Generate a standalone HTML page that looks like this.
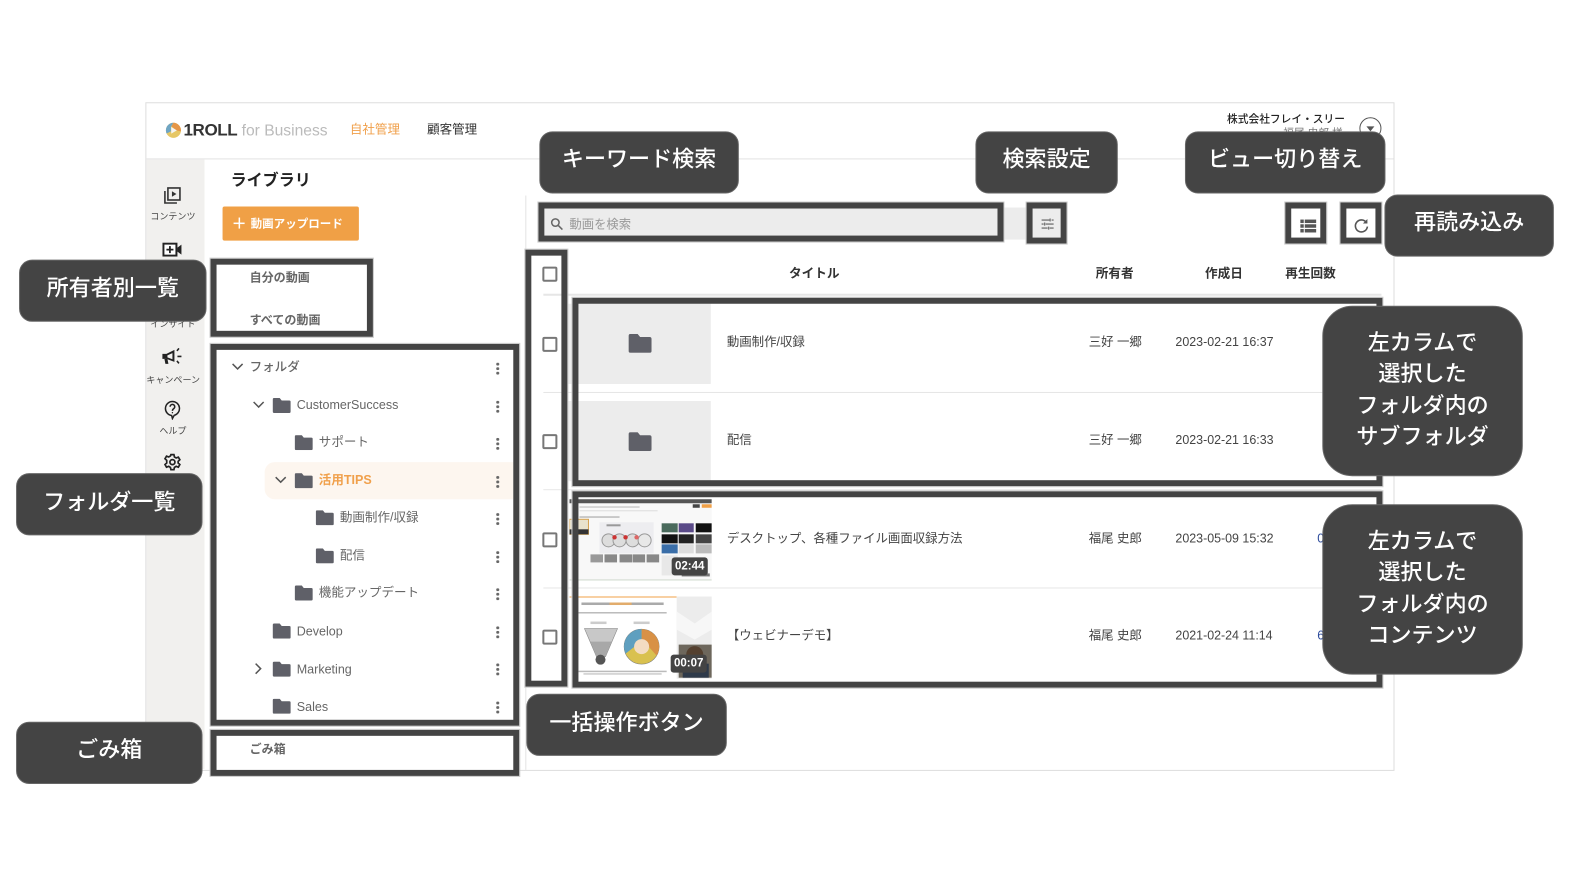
<!DOCTYPE html>
<html lang="ja"><head><meta charset="utf-8"><title>1ROLL</title>
<style>
*{box-sizing:border-box;margin:0;padding:0}
html,body{width:1572px;height:886px;background:#fff;overflow:hidden}
body{position:relative;font-family:"Liberation Sans","Noto Sans CJK JP",sans-serif;color:#333}
#w{position:absolute;left:0;top:0;width:1572px;height:886px;transform:scale(1.0025);transform-origin:0 0}
.a{position:absolute;white-space:nowrap}
.fr{position:absolute;border:6px solid #444;outline:1px solid #ccc;background:transparent}
.cb{position:absolute;left:541px;width:15px;height:15px;border:2px solid #777;border-radius:2px;background:#fff}
.tip{position:absolute;background:#444;border:1px solid #666;color:#fff;border-radius:13px;display:flex;align-items:center;justify-content:center;text-align:center;font-size:22px;font-weight:500;line-height:31.5px;padding-bottom:5px}
.tip.m{padding-bottom:3px;border-radius:30px;font-size:22px}
.lab{position:absolute;left:146px;width:53px;text-align:center;font-size:9px;color:#444;white-space:nowrap}
.t{position:absolute;font-size:12.5px;color:#666;white-space:nowrap}
.d{position:absolute;left:495px;width:3px;height:13px;background:radial-gradient(circle,#666 1.4px,transparent 1.6px) 0 0/3px 4.5px repeat-y}
.f{position:absolute;width:18px;height:15px}
.cell{position:absolute;font-size:12.4px;color:#444;white-space:nowrap;line-height:18px}
.hd{position:absolute;top:262px;font-size:12.6px;font-weight:700;color:#333;white-space:nowrap}
.ln{position:absolute;left:542px;width:836px;height:1px;background:#e6e6e6}
</style></head><body><div id="w">
<svg width="0" height="0" style="position:absolute"><defs><symbol id="fo" viewBox="0 0 18 15"><path d="M1.5 0H7l2 2.500h7.500A1.500 1.500 0 0 1 18 4v9.500a1.500 1.500 0 0 1-1.500 1.500h-15A1.500 1.500 0 0 1 0 13.500V1.500A1.500 1.500 0 0 1 1.500 0z" fill="#5f6068"/></symbol></defs></svg>

<!-- app frame -->
<div class="a" style="left:145px;top:102px;width:1246px;height:667px;border:1.5px solid #ddd"></div>
<div class="a" style="left:146px;top:158px;width:1244px;height:1px;background:#e2e2e2"></div>
<div class="a" style="left:146px;top:159px;width:58px;height:608px;background:#f1f0ee"></div>
<div class="a" style="left:524px;top:195px;width:1px;height:573px;background:#e4e4e4"></div>

<!-- header -->
<svg class="a" style="left:165px;top:122px" width="16" height="16" viewBox="0 0 16 16"><circle cx="8" cy="8" r="7.500" fill="#e6c766"/><path d="M8 .5A7.500 7.500 0 0 0 1.200 11.200L5.500 9V4.500z" fill="#6fa5c4"/><path d="M8 .5A7.500 7.500 0 0 1 15.400 9L11 8 6 4z" fill="#e59648"/><path d="M5.800 4.700l5.600 3.300-5.600 3.300z" fill="#f4f4f4"/></svg>
<div class="a" style="left:183px;top:120px;font-size:17px;font-weight:700;color:#333;letter-spacing:-.4px;line-height:20px">1ROLL</div>
<div class="a" style="left:241px;top:121px;font-size:15.600px;color:#bbb;line-height:20px">for Business</div>
<div class="a" style="left:349px;top:120px;font-size:12.500px;color:#f0a04b;line-height:18px">自社管理</div>
<div class="a" style="left:426px;top:120px;font-size:12.500px;color:#333;line-height:18px">顧客管理</div>
<div class="a" style="left:1224px;top:110.500px;font-size:10.700px;font-weight:500;color:#222;line-height:16px">株式会社フレイ・スリー</div>
<div class="a" style="left:1280px;top:125px;font-size:10.700px;color:#777;line-height:16px">福尾 史郎 様</div>
<div class="a" style="left:1356px;top:117px;width:22px;height:22px;border:1.500px solid #555;border-radius:50%"></div>
<div class="a" style="left:1363px;top:126px;border-left:4.500px solid transparent;border-right:4.500px solid transparent;border-top:5px solid #555"></div>

<!-- sidebar -->
<svg class="a" style="left:163px;top:186px" width="18" height="18" viewBox="0 0 18 18" fill="none" stroke="#333" stroke-width="1.600"><rect x="4.500" y="1.500" width="12" height="12"/><path d="M1.500 4.500v12h12"/><path d="M8.500 4.800l4.500 2.700-4.500 2.700z" fill="#333" stroke="none"/></svg>
<div class="lab" style="top:209px">コンテンツ</div>
<svg class="a" style="left:162px;top:242px" width="20" height="14" viewBox="0 0 20 14"><rect x="1" y="1" width="13" height="12" fill="#fff" stroke="#222" stroke-width="2"/><path d="M7.500 3.500v7M4 7h7" stroke="#222" stroke-width="1.800"/><path d="M15 5l4-3v10l-4-3z" fill="#222"/></svg>
<div class="lab" style="top:316px">インサイト</div>
<svg class="a" style="left:161px;top:347px" width="22" height="18" viewBox="0 0 22 18"><path d="M1 6h4l8-4v12L5 11H1z" fill="#222"/><path d="M3 11l1 5h3l-1-5z" fill="#222"/><path d="M6 7.500l5-2.200v6L6 9.500z" fill="#f1f0ee"/><path d="M15.500 3l2-2.500M16 8.500h4M15.500 13l2 2.500" stroke="#222" stroke-width="1.600"/></svg>
<div class="lab" style="top:372px">キャンペーン</div>
<svg class="a" style="left:163px;top:399px" width="18" height="20" viewBox="0 0 18 20" fill="none" stroke="#222" stroke-width="1.500"><path d="M9 1.500a7 7 0 0 1 1.800 13.770L9 18.500l-.8-3.050A7 7 0 0 1 9 1.500z"/><path d="M6.700 6.700a2.300 2.300 0 1 1 3.600 1.900C9.400 9.200 9 9.700 9 10.800"/><circle cx="9" cy="12.700" r=".7" fill="#222" stroke="none"/></svg>
<div class="lab" style="top:423px">ヘルプ</div>
<svg class="a" style="left:163px;top:452px" width="18" height="18" viewBox="0 0 18 18" fill="none" stroke="#222" stroke-width="1.700"><circle cx="9" cy="9" r="2.500"/><path d="M7.500 1.500h3l.5 2.300 1.700 1 2.200-.8 1.500 2.600-1.700 1.600v1.600l1.700 1.600-1.500 2.600-2.200-.8-1.700 1-.5 2.300h-3l-.5-2.300-1.700-1-2.200.8-1.500-2.600 1.700-1.600V7.200L1.600 5.600l1.500-2.600 2.200.8 1.700-1z"/></svg>

<!-- library column -->
<div class="a" style="left:230px;top:169px;font-size:16px;font-weight:700;color:#222;line-height:24px">ライブラリ</div>
<div class="a" style="left:222px;top:206px;width:136px;height:34px;background:#f0a046;border-radius:2px"></div>
<div class="a" style="left:233px;top:217px;width:11px;height:11px;background:linear-gradient(#fff,#fff) center/11px 1.500px no-repeat,linear-gradient(#fff,#fff) center/1.500px 11px no-repeat"></div>
<div class="a" style="left:250px;top:214.500px;font-size:11.500px;font-weight:700;color:#fff;line-height:18px">動画アップロード</div>
<div class="t" style="left:249px;top:267.500px;font-weight:700;line-height:18px;font-size:12px">自分の動画</div>
<div class="t" style="left:249px;top:310px;font-weight:700;line-height:18px;font-size:12px">すべての動画</div>

<!-- tree -->
<div class="a" style="left:264px;top:461px;width:248px;height:37px;background:#fdf6ef;border-radius:10px 0 0 10px"></div>
<svg class="a" style="left:231px;top:362px" width="12" height="8" viewBox="0 0 12 8" fill="none" stroke="#555" stroke-width="1.500"><path d="M1 1l5 5 5-5"/></svg>
<div class="t" style="left:249px;top:357px;font-weight:500;line-height:18px">フォルダ</div>
<svg class="a" style="left:252px;top:400px" width="12" height="8" viewBox="0 0 12 8" fill="none" stroke="#555" stroke-width="1.500"><path d="M1 1l5 5 5-5"/></svg>
<svg class="f" style="left:272px;top:397px"><use href="#fo"/></svg><div class="t" style="left:296px;top:395px;line-height:18px">CustomerSuccess</div>
<svg class="f" style="left:294px;top:434px"><use href="#fo"/></svg><div class="t" style="left:318px;top:432px;line-height:18px">サポート</div>
<svg class="a" style="left:274px;top:475px" width="12" height="8" viewBox="0 0 12 8" fill="none" stroke="#555" stroke-width="1.500"><path d="M1 1l5 5 5-5"/></svg>
<svg class="f" style="left:294px;top:472px"><use href="#fo"/></svg><div class="t" style="left:318px;top:470px;line-height:18px;color:#f0a04b;font-weight:700">活用TIPS</div>
<svg class="f" style="left:315px;top:509px"><use href="#fo"/></svg><div class="t" style="left:339px;top:507px;line-height:18px">動画制作/収録</div>
<svg class="f" style="left:315px;top:547px"><use href="#fo"/></svg><div class="t" style="left:339px;top:545px;line-height:18px">配信</div>
<svg class="f" style="left:294px;top:584px"><use href="#fo"/></svg><div class="t" style="left:318px;top:582px;line-height:18px">機能アップデート</div>
<svg class="f" style="left:272px;top:622px"><use href="#fo"/></svg><div class="t" style="left:296px;top:620.500px;line-height:18px">Develop</div>
<svg class="a" style="left:254px;top:661px" width="8" height="12" viewBox="0 0 8 12" fill="none" stroke="#555" stroke-width="1.500"><path d="M1 1l5 5-5 5"/></svg>
<svg class="f" style="left:272px;top:660px"><use href="#fo"/></svg><div class="t" style="left:296px;top:658.500px;line-height:18px">Marketing</div>
<svg class="f" style="left:272px;top:697px"><use href="#fo"/></svg><div class="t" style="left:296px;top:695.500px;line-height:18px">Sales</div>
<div class="d" style="top:360.500px"></div><div class="d" style="top:398.500px"></div><div class="d" style="top:435.500px"></div><div class="d" style="top:473.500px"></div><div class="d" style="top:510.500px"></div><div class="d" style="top:548.500px"></div><div class="d" style="top:585.500px"></div><div class="d" style="top:623.500px"></div><div class="d" style="top:660.500px"></div><div class="d" style="top:698.500px"></div>
<div class="t" style="left:249px;top:738px;font-weight:700;line-height:18px;font-size:12px">ごみ箱</div>

<!-- search -->
<div class="a" style="left:541px;top:207px;width:483px;height:32px;background:#ececec"></div>
<div class="a" style="left:1025px;top:205px;width:36px;height:37px;background:#ececec"></div>
<svg class="a" style="left:549px;top:217px" width="13" height="13" viewBox="0 0 13 13" fill="none" stroke="#666" stroke-width="1.500"><circle cx="5" cy="5" r="3.700"/><path d="M8 8l4 4"/></svg>
<div class="a" style="left:568px;top:214.500px;font-size:12.300px;color:#999;line-height:18px">動画を検索</div>
<svg class="a" style="left:1038px;top:217px" width="14" height="13" viewBox="0 0 14 13" stroke="#777" stroke-width="1.300" fill="none"><path d="M1 2.500h8M11 2.500h2M1 6.500h2M5 6.500h8M1 10.500h6M9 10.500h4M9.500 1v3M4 5v3M8 9v3"/></svg>
<svg class="a" style="left:1297px;top:219px" width="16" height="13" viewBox="0 0 16 13" fill="#555"><rect width="3.500" height="3.500"/><rect x="4.500" width="11.500" height="3.500"/><rect y="4.700" width="3.500" height="3.500"/><rect x="4.500" y="4.700" width="11.500" height="3.500"/><rect y="9.400" width="3.500" height="3.500"/><rect x="4.500" y="9.400" width="11.500" height="3.500"/></svg>
<svg class="a" style="left:1350px;top:217px" width="16" height="16" viewBox="0 0 16 16" fill="none" stroke="#555" stroke-width="1.600"><path d="M13 5A6 6 0 1 0 14 9"/><path d="M14 1.500v4.500H9.500z" fill="#555" stroke="none"/></svg>

<!-- table -->
<div class="cb" style="top:266px"></div><div class="cb" style="top:335.500px"></div><div class="cb" style="top:433px"></div><div class="cb" style="top:530.500px"></div><div class="cb" style="top:628px"></div>
<div class="hd" style="left:787px">タイトル</div><div class="hd" style="left:1093px">所有者</div><div class="hd" style="left:1202px">作成日</div><div class="hd" style="left:1282px">再生回数</div>
<div class="ln" style="top:293px;height:2px"></div><div class="ln" style="top:391px"></div><div class="ln" style="top:488px"></div><div class="ln" style="top:586px"></div>

<div class="a" style="left:567px;top:302.500px;width:142px;height:80px;background:#ececec"></div>
<div class="a" style="left:567px;top:399.500px;width:142px;height:80px;background:#ececec"></div>
<svg class="a" style="left:625.500px;top:332.500px;width:25px;height:19px"><use href="#fo"/></svg>
<svg class="a" style="left:625.500px;top:430.500px;width:25px;height:19px"><use href="#fo"/></svg>
<div class="cell" style="left:725px;top:332px">動画制作/収録</div>
<div class="cell" style="left:725px;top:430px">配信</div>
<div class="cell" style="left:725px;top:527.500px">デスクトップ、各種ファイル画面収録方法</div>
<div class="cell" style="left:725px;top:625px">【ウェビナーデモ】</div>
<div class="cell" style="left:1086px;top:332px">三好 一郷</div><div class="cell" style="left:1086px;top:430px">三好 一郷</div><div class="cell" style="left:1086px;top:527.500px">福尾 史郎</div><div class="cell" style="left:1086px;top:625px">福尾 史郎</div>
<div class="cell" style="left:1172.500px;top:332px">2023-02-21 16:37</div><div class="cell" style="left:1172.500px;top:430px">2023-02-21 16:33</div><div class="cell" style="left:1172.500px;top:527.500px">2023-05-09 15:32</div><div class="cell" style="left:1172.500px;top:625px">2021-02-24 11:14</div>
<div class="cell" style="left:1314px;top:527.500px;color:#2b4a9b">0</div><div class="cell" style="left:1314px;top:625px;color:#2b4a9b">6</div>

<!-- thumb 1 -->
<svg class="a" style="left:567.500px;top:496.500px" width="142" height="82" viewBox="0 0 142 82">
<rect width="142" height="81" fill="#f8f8f8"/><rect y="81" width="142" height="1" fill="#cfd8cc"/><rect width="142" height="4" y="1" fill="#555"/><rect x="123" y="6" width="7" height="3.500" fill="#444"/><rect x="132" y="6" width="10" height="3.500" fill="#f0a046"/>
<rect x="10" y="8" width="60" height="1.500" fill="#ccc"/><rect x="10" y="12" width="78" height="1" fill="#ddd"/><rect x="10" y="18" width="40" height="1.500" fill="#bbb"/>
<rect x="30" y="24" width="54" height="31" fill="#ededf0"/>
<rect x="37" y="26" width="14" height="2" fill="#999"/>
<circle cx="39" cy="42" r="6.500" fill="#ddd" stroke="#999"/><circle cx="50" cy="42" r="6.500" fill="#ddd" stroke="#999"/><circle cx="63" cy="42" r="6.500" fill="#ddd" stroke="#999"/><circle cx="75" cy="42" r="6.500" fill="#e8e8e8" stroke="#999"/>
<circle cx="45" cy="39" r="2.200" fill="#c33"/><circle cx="56" cy="39" r="2.200" fill="#c33"/><circle cx="67" cy="39" r="2.200" fill="#d66"/>
<rect x="21" y="56" width="12.500" height="8" fill="#999"/><rect x="35" y="56" width="12.500" height="8" fill="#888"/><rect x="50" y="56" width="12.500" height="8" fill="#888"/><rect x="63" y="56" width="12.500" height="8" fill="#888"/><rect x="77" y="56" width="12.500" height="8" fill="#888"/>
<rect x="0" y="21" width="19" height="15" fill="#e9e2cc" stroke="#d6a24e"/><rect x="0" y="31" width="19" height="5" fill="#333"/>
<rect x="92" y="25" width="16" height="9" fill="#4a6a5c"/><rect x="109" y="25" width="15" height="9" fill="#5a4a88"/><rect x="126" y="25" width="16" height="9" fill="#111"/>
<rect x="92" y="36" width="16" height="9" fill="#111"/><rect x="109" y="36" width="15" height="9" fill="#222"/><rect x="126" y="36" width="16" height="9" fill="#444"/>
<rect x="92" y="46" width="16" height="9" fill="#3a6ea8"/><rect x="109" y="46" width="15" height="9" fill="#ddd"/><rect x="126" y="46" width="16" height="9" fill="#bbb"/>
<rect x="92" y="57" width="16" height="20" fill="#e8e8e8"/><rect x="112" y="75" width="28" height="3" fill="#777"/>
</svg>
<!-- thumb 2 -->
<svg class="a" style="left:567.500px;top:594.500px" width="142" height="85" viewBox="0 0 142 85">
<rect width="142" height="85" fill="#fff"/><rect width="107" height="1" fill="#f0a046"/><rect x="107" width="35" height="82" fill="#ececec"/><path d="M107 15l18 12 17-12v18l-17 10-18-10z" fill="#f7f7f7"/>
<rect x="109" y="48" width="33" height="33" fill="#6d675c"/><circle cx="125" cy="58" r="8.500" fill="#54402f"/><rect x="113" y="67" width="26" height="14" fill="#2e3a4a"/>
<rect x="12" y="6" width="82" height="2.500" fill="#aaa"/><rect x="40" y="6" width="22" height="2.500" fill="#e2ac6c"/><rect x="9" y="15.500" width="88" height="1.500" fill="#bbb"/>
<rect x="21" y="25" width="16" height="2.500" fill="#ccc"/><rect x="64" y="25" width="16" height="2.500" fill="#ccc"/>
<path d="M15 32h33L36 60h-9z" fill="#c8c8c8" stroke="#888" stroke-width=".6"/><path d="M21 45h21l-6 15H27z" fill="#a8a8a8"/><circle cx="31" cy="63" r="5" fill="#555"/>
<circle cx="72" cy="50" r="17.500" fill="#d9c14f" stroke="#777" stroke-width=".5"/><path d="M72 32.500a17.500 17.500 0 0 1 15 26.500L79 50l-7-7z" fill="#d89146"/><path d="M72 32.500a17.500 17.500 0 0 0-16 24.500L65 50l7-7z" fill="#5f9fbf"/><circle cx="72" cy="50" r="7.500" fill="#f3dcc2"/>
<rect x="9" y="74" width="88" height="1.500" fill="#bbb"/><rect x="14" y="76.500" width="78" height="1.500" fill="#ccc"/>
</svg>
<div class="a" style="left:670px;top:555.500px;width:36px;height:18px;background:#444;border-radius:3px;color:#fff;font-size:11.500px;font-weight:700;text-align:center;line-height:18px">02:44</div>
<div class="a" style="left:669px;top:652.500px;width:36px;height:18px;background:#444;border-radius:3px;color:#fff;font-size:11.500px;font-weight:700;text-align:center;line-height:18px">00:07</div>

<!-- annotation frames -->
<div class="fr" style="left:209.500px;top:257.500px;width:162px;height:78px"></div>
<div class="fr" style="left:209.500px;top:342.500px;width:308px;height:381px"></div>
<div class="fr" style="left:209.500px;top:727.500px;width:308px;height:46px"></div>
<div class="fr" style="left:537px;top:202px;width:464px;height:39px"></div>
<div class="fr" style="left:1024px;top:202px;width:40px;height:41px"></div>
<div class="fr" style="left:1282px;top:202px;width:41px;height:41px"></div>
<div class="fr" style="left:1337px;top:202px;width:41px;height:41px"></div>
<div class="fr" style="left:523.500px;top:248.500px;width:42px;height:436px"></div>
<div class="fr" style="left:570.500px;top:296.500px;width:808px;height:188px"></div>
<div class="fr" style="left:570.500px;top:489.500px;width:808px;height:196px"></div>

<!-- tips -->
<div class="tip" style="left:538px;top:130.500px;width:199px;height:62px;padding-bottom:6px">キーワード検索</div>
<div class="tip" style="left:973px;top:130.500px;width:142px;height:62px;padding-bottom:6px">検索設定</div>
<div class="tip" style="left:1182px;top:130.500px;width:200px;height:62px;padding-bottom:6px">ビュー切り替え</div>
<div class="tip" style="left:1381px;top:193.500px;width:169px;height:62px">再読み込み</div>
<div class="tip" style="left:19px;top:259px;width:187px;height:62px">所有者別一覧</div>
<div class="tip" style="left:16px;top:472px;width:186px;height:62px">フォルダ一覧</div>
<div class="tip" style="left:16px;top:719.500px;width:186px;height:62px">ごみ箱</div>
<div class="tip" style="left:525px;top:692px;width:200px;height:62px">一括操作ボタン</div>
<div class="tip m" style="left:1319px;top:305px;width:200px;height:170px">左カラムで<br>選択した<br>フォルダ内の<br>サブフォルダ</div>
<div class="tip m" style="left:1319px;top:503px;width:200px;height:170px">左カラムで<br>選択した<br>フォルダ内の<br>コンテンツ</div>
</div></body></html>
